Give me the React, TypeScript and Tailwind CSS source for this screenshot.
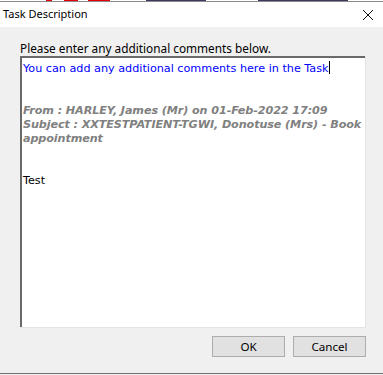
import React from 'react'

const ui = { fontFamily: '"Segoe UI", "Noto Sans", "Liberation Sans", sans-serif' }
const mono = { fontFamily: 'Tahoma, "DejaVu Sans", "Liberation Sans", sans-serif' }

function TopStrip() {
  return (
    <div className="relative h-[2px] bg-white">
      <div className="absolute left-[46px] top-0 h-px w-[6px] bg-red-600" />
      <div className="absolute left-[64px] top-0 h-px w-[14px] bg-red-600" />
      <div className="absolute left-[88px] top-0 h-px w-[22px] bg-red-600" />
      <div className="absolute left-[146px] top-0 h-px w-[60px] bg-[#3a3a60]" />
      <div className="absolute left-[258px] top-0 h-px w-[90px] bg-[#3a3a60]" />
      <div className="absolute bottom-0 left-0 h-px w-full bg-[#8a8a8a]" />
    </div>
  )
}

function Button({ label }: { label: string }) {
  return (
    <button
      className="flex h-[21px] w-[73px] items-center justify-center border border-[#adadad] bg-[#e1e1e1] text-[11.6px] text-black"
      style={ui}
    >
      {label}
    </button>
  )
}

export default function App() {
  return (
    <div className="h-[375px] w-[383px] overflow-hidden bg-[#f0f0f0]">
      <TopStrip />
      <div className="flex h-[25px] items-center justify-between bg-white pl-[3px] pr-[9px]">
        <span className="text-[11px] text-black" style={ui}>
          Task Description
        </span>
        <svg width="12" height="12" viewBox="0 0 12 12" className="mt-[1px]">
          <path d="M1 1 L11 11 M11 1 L1 11" stroke="#111" strokeWidth="1" />
        </svg>
      </div>
      <div className="flex h-[347px] flex-col border-b border-[#707070] pl-[20px] pr-[17px]">
        <div className="mt-[13px] h-[16px] text-[11.8px] leading-[16px] text-black" style={ui}>
          Please enter any additional comments below.
        </div>
        <div className="h-[272px] border-b border-r border-[#e3e3e3] bg-white">
          <div className="h-full overflow-hidden border-l-2 border-t-2 border-[#6a6a6a] pl-[1px] pt-[3px] text-[11.2px] leading-[14px]" style={mono}>
            <div className="text-[#0000ff]">
              You can add any additional comments here in the Task
              <span className="ml-px inline-block h-[13px] w-px bg-black align-[-2px]" />
            </div>
            <div className="h-[28px]" />
            <div className="whitespace-nowrap font-bold italic tracking-[-0.1px] text-[#808080]">
              <div>From : HARLEY, James (Mr) on 01-Feb-2022 17:09</div>
              <div>Subject : XXTESTPATIENT-TGWI, Donotuse (Mrs) - Book</div>
              <div>appointment</div>
            </div>
            <div className="h-[28px]" />
            <div className="text-black">Test</div>
          </div>
        </div>
        <div className="mt-[8px] flex justify-end gap-[8px]">
          <Button label="OK" />
          <Button label="Cancel" />
        </div>
      </div>
    </div>
  )
}
